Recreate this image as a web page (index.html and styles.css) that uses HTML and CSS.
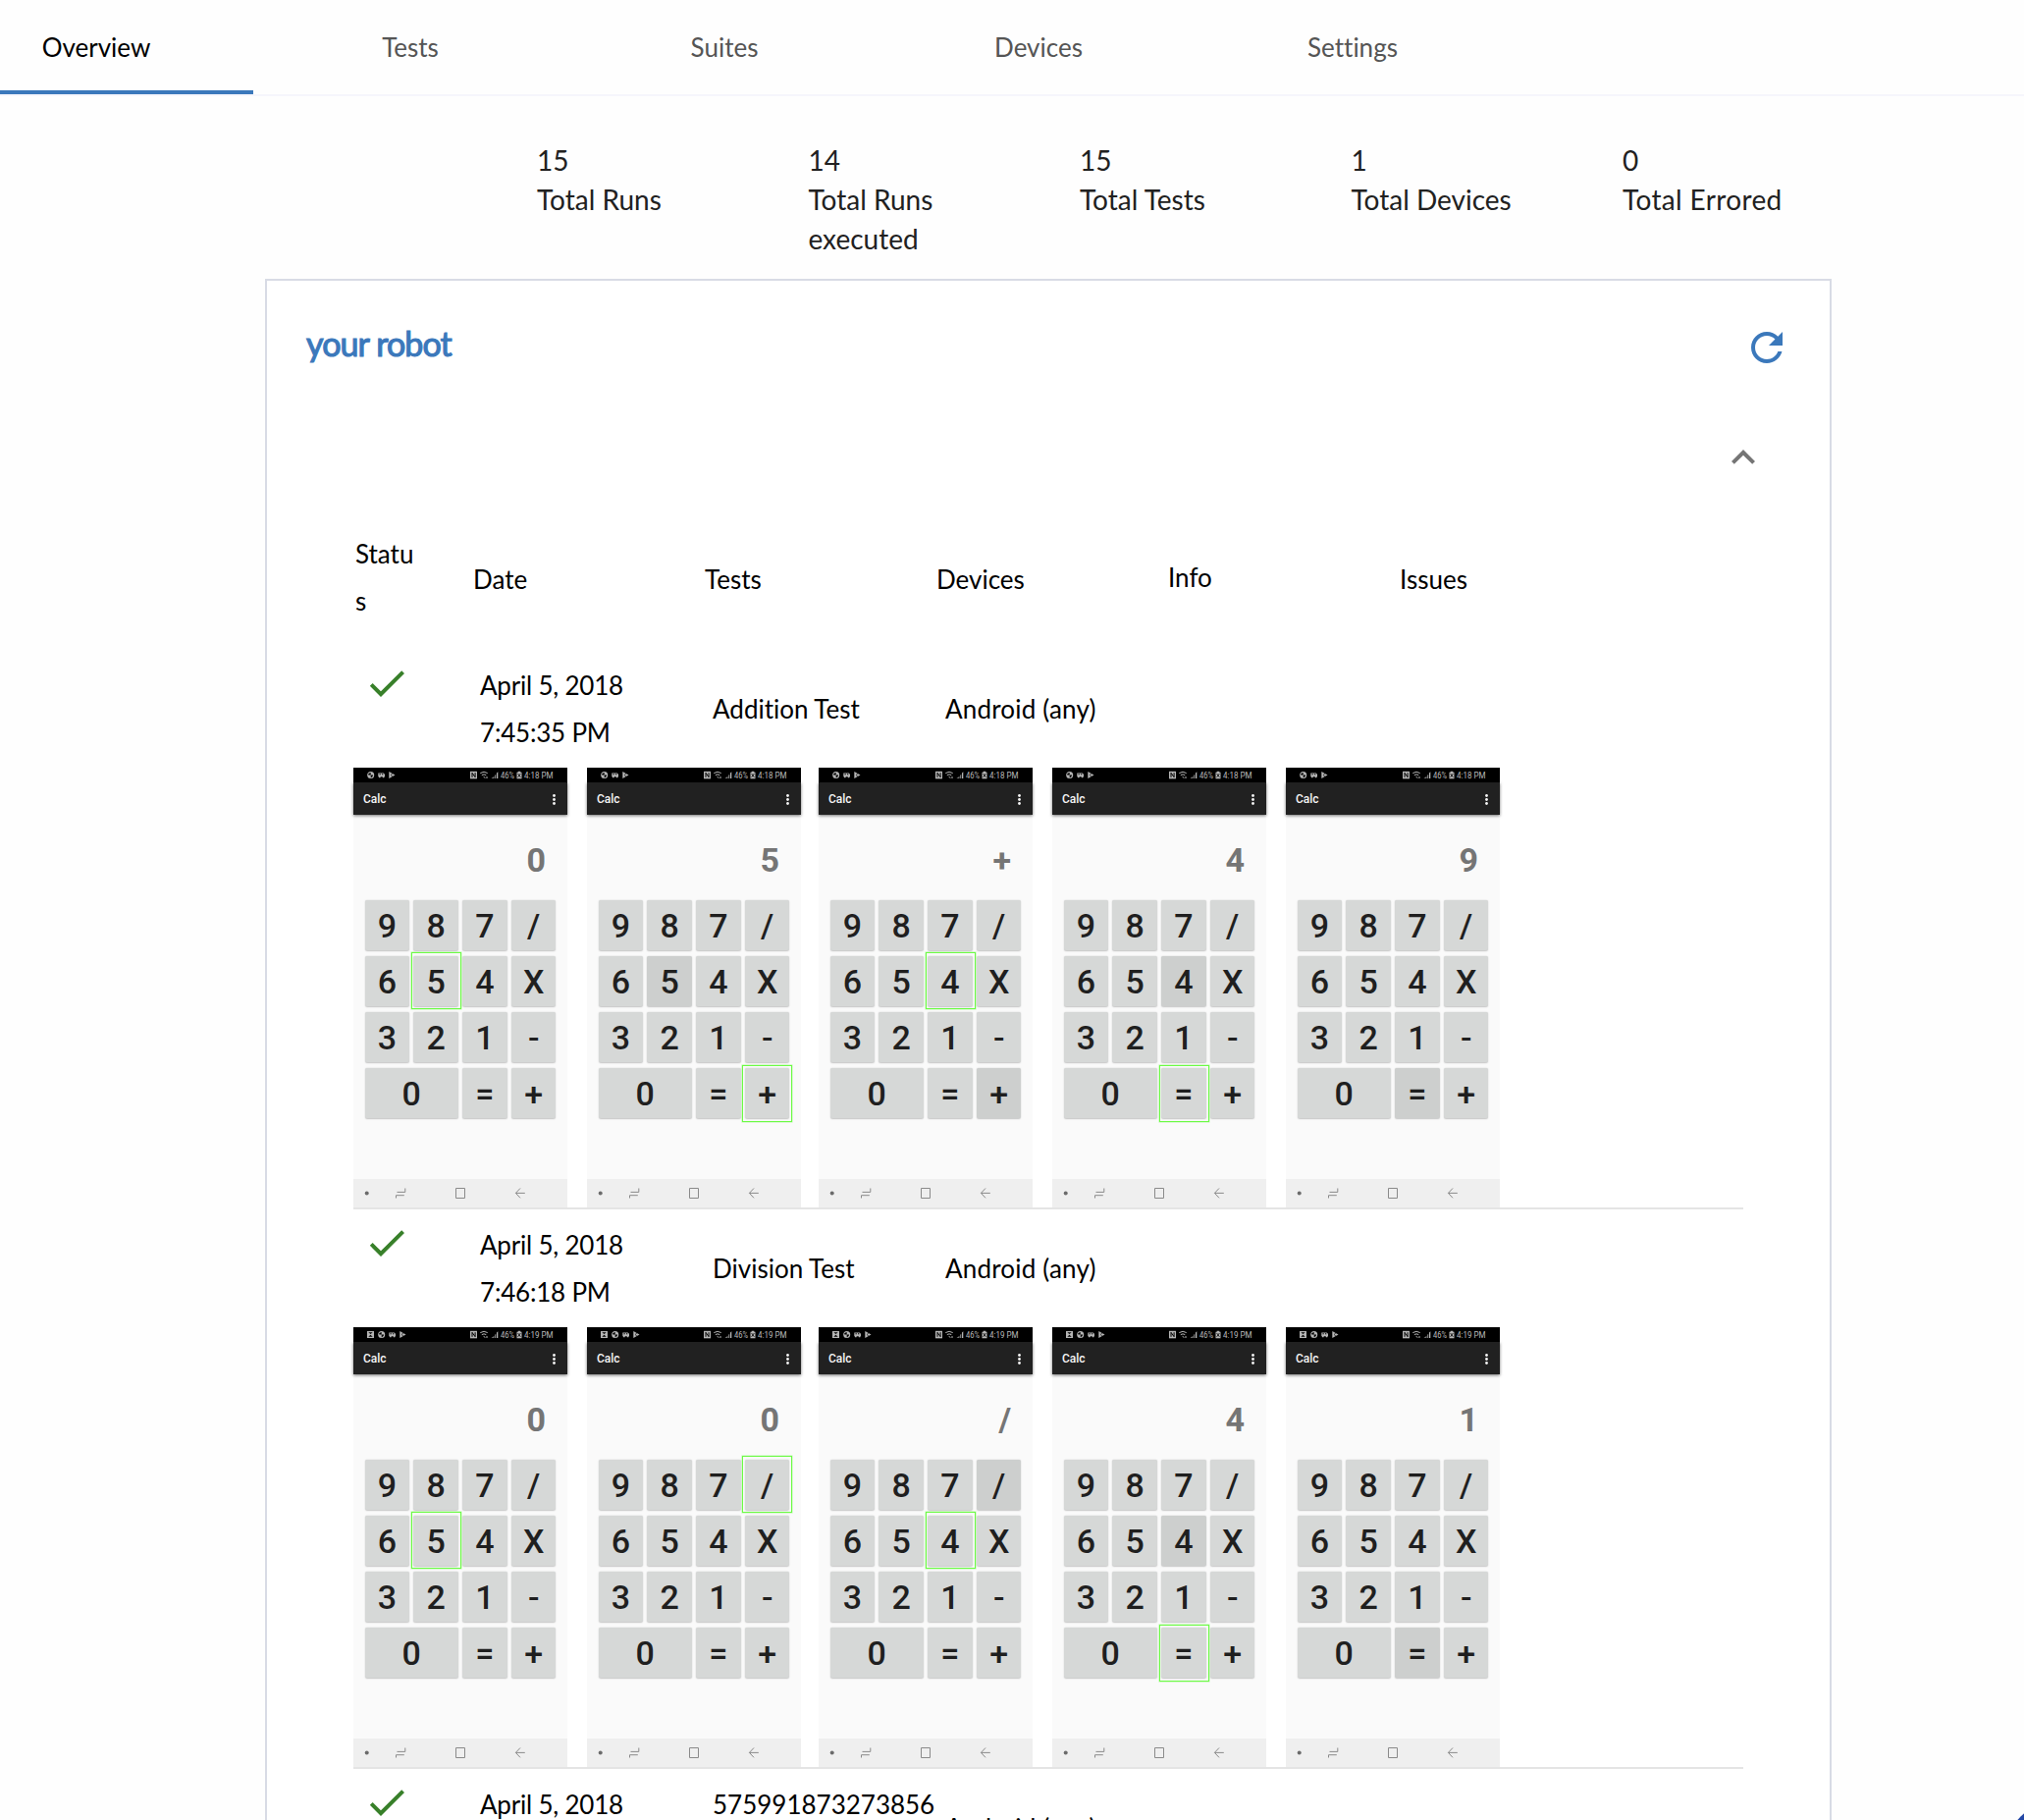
FILE: index.html
```html
<!DOCTYPE html>
<html lang="en">
<head>
<meta charset="utf-8">
<title>Overview</title>
<link rel="stylesheet" href="styles.css">
</head>
<body>
<nav class="tabs">
  <a class="tab tab-active">Overview</a>
  <a class="tab">Tests</a>
  <a class="tab">Suites</a>
  <a class="tab">Devices</a>
  <a class="tab">Settings</a>
</nav>
<section class="stats">
  <div class="stat"><div>15</div><div>Total Runs</div></div>
  <div class="stat"><div>14</div><div>Total Runs executed</div></div>
  <div class="stat"><div>15</div><div>Total Tests</div></div>
  <div class="stat"><div>1</div><div>Total Devices</div></div>
  <div class="stat stat-errored"><div>0</div><div>Total Errored</div></div>
</section>
<main class="panel">
  <header class="panel-head">
    <h1 class="panel-title">your robot</h1>
    <svg class="icon icon-refresh" viewBox="0 0 24 24"><path d="M17.65 6.35C16.2 4.9 14.21 4 12 4c-4.42 0-7.99 3.58-7.99 8s3.57 8 7.99 8c3.73 0 6.84-2.55 7.73-6h-2.08c-.82 2.33-3.04 4-5.65 4-3.31 0-6-2.69-6-6s2.69-6 6-6c1.66 0 3.14.69 4.22 1.78L13 11h7V4l-2.35 2.35z"/></svg>
  </header>
  <div class="collapse">
    <svg class="icon icon-collapse" viewBox="0 0 24 24"><path d="M12 8l-6 6 1.41 1.41L12 10.83l4.59 4.58L18 14z"/></svg>
  </div>
  <div class="table">
    <div class="head-row">
      <div class="head-status">Status</div>
      <div>Date</div>
      <div>Tests</div>
      <div>Devices</div>
      <div class="head-info">Info</div>
      <div>Issues</div>
    </div>
    <div class="run">
      <div class="run-row">
        <svg class="icon icon-check" viewBox="0 0 24 24"><path d="M9 16.17L4.83 12l-1.42 1.41L9 19 21 7l-1.41-1.41z"/></svg>
        <div class="run-date">April 5, 2018 7:45:35 PM</div>
        <div>Addition Test</div>
        <div class="run-device">Android (any)</div>
      </div>
      <div class="shots" data-time="4:18 PM" data-shots="0,5,; 5,+,5; +,4,+; 4,=,4; 9,,="></div>
    </div>
    <div class="run">
      <div class="run-row">
        <svg class="icon icon-check" viewBox="0 0 24 24"><path d="M9 16.17L4.83 12l-1.42 1.41L9 19 21 7l-1.41-1.41z"/></svg>
        <div class="run-date">April 5, 2018 7:46:18 PM</div>
        <div>Division Test</div>
        <div class="run-device">Android (any)</div>
      </div>
      <div class="shots" data-time="4:19 PM" data-picture="1" data-shots="0,5,; 0,/,; /,4,/; 4,=,4; 1,,="></div>
    </div>
    <div class="run">
      <div class="run-row">
        <svg class="icon icon-check" viewBox="0 0 24 24"><path d="M9 16.17L4.83 12l-1.42 1.41L9 19 21 7l-1.41-1.41z"/></svg>
        <div class="run-date">April 5, 2018</div>
        <div class="run-long">575991873273856</div>
        <div class="run-device">Android (any)</div>
      </div>
    </div>
  </div>
</main>
<div class="chat-button"></div>
<script src="script.js"></script>
</body>
</html>
```
FILE: styles.css
```css
* { box-sizing: border-box; }
body {
  margin: 0;
  height: 1854px;
  overflow: hidden;
  background: #fefefe;
  font: 26px/48px Lato, sans-serif;
  font-variant-ligatures: none;
  color: #000;
}
.tabs {
  display: flex;
  height: 98px;
  padding-left: 258px;
  margin-left: -320px;
  border-bottom: 2px solid #f6f6fc;
}
.tab {
  width: 320px;
  line-height: 97px;
  text-align: center;
  color: #555;
}
.tab-active {
  color: #000;
  border-bottom: 4px solid #3b78bb;
}
.stats {
  display: grid;
  grid-template-columns: repeat(5, 276.5px);
  padding: 45px 0 20px 547px;
  height: 186px;
  font-size: 28px;
  line-height: 40px;
  color: #212121;
}
.stat { padding-right: 96px; }
.stat:nth-child(n+3) { padding-right: 60px; }
.stat-errored { letter-spacing: .35px; }
.panel {
  width: 1596px;
  height: 1570px;
  margin-left: 270px;
  padding: 44px 47px 0 39px;
  border: 2px solid #d8dbe5;
  border-bottom: 0;
  background: #fff;
  overflow: hidden;
}
.panel-head {
  display: flex;
  justify-content: space-between;
  align-items: flex-start;
}
.panel-title {
  margin: 0;
  padding-left: 1px;
  font-size: 34px;
  line-height: 39px;
  font-weight: 400;
  letter-spacing: -.9px;
  -webkit-text-stroke: 1.1px #3b78bb;
  color: #3b78bb;
}
.icon { display: block; width: 48px; height: 48px; flex: none; }
.icon-refresh { fill: #3b78bb; margin-right: -7px; }
.collapse {
  display: flex;
  justify-content: flex-end;
  padding: 64px 17px 0 0;
}
.icon-collapse { fill: #757575; }
.table { width: 1416px; margin-left: 49px; }
.head-row {
  display: grid;
  grid-template-columns: 120px repeat(5, 236px);
  align-items: center;
  height: 172px;
  padding: 28px 0 0 2px;
}
.head-status {
  width: 68px;
  word-break: break-all;
  padding-bottom: 5px;
}
.head-info { padding-bottom: 4px; }
.run { border-bottom: 2px solid #e4e4e4; }
.run-row {
  display: grid;
  grid-template-columns: 119px 237px 237px 236px;
  align-items: center;
  height: 120px;
  padding-left: 10px;
}
.icon-check { align-self: start; margin-top: 10px; fill: #38802a; }
.run-date { width: 160px; height: 96px; letter-spacing: -.2px; }
.run-long { height: 96px; }
.run-device { letter-spacing: .2px; }
.shots { display: flex; gap: 20px; }
.phone {
  display: flex;
  flex-direction: column;
  width: 218px;
  height: 448px;
  background: #fafafa;
  font-family: Roboto, sans-serif;
  color: #1f1f1f;
}
.phone:nth-child(3) { margin-left: -2px; }
.phone-status { display: block; width: 218px; height: 15px; background: #000; }
.phone-status text { font: 9.6px Roboto, sans-serif; fill: #bbb; }
.phone-bar {
  display: flex;
  justify-content: space-between;
  align-items: center;
  height: 33px;
  padding: 1px 12px 0 10px;
  background: #212121;
  box-shadow: 0 1px 3px rgba(0, 0, 0, .55);
  font-size: 12px;
  line-height: 16px;
  font-weight: 500;
  color: #f5f5f5;
}
.dots { width: 3px; height: 11px; fill: #f5f5f5; }
.display {
  height: 86px;
  padding-right: 22px;
  text-align: right;
  font-size: 34px;
  line-height: 92px;
  font-weight: 700;
  color: #757575;
}
.keys {
  display: grid;
  grid-template-columns: repeat(4, 45.3px);
  grid-auto-rows: 51px;
  gap: 6.25px 4.5px;
  padding: .5px 0 0 11.7px;
  height: 285px;
}
.key {
  position: relative;
  border-radius: 2px;
  background: #d6d8d7;
  box-shadow: 0 .5px 1.5px rgba(0, 0, 0, .22);
  font-size: 34px;
  line-height: 53px;
  font-weight: 500;
  text-align: center;
}
.key-wide { grid-column: span 2; }
.key-pressed { background: #cdcfce; }
.key-target::after {
  content: "";
  position: absolute;
  inset: -3.3px -3px -3.3px -2.7px;
  border: 1px solid #6cfa45;
  box-shadow: 0 0 0 .5px rgba(124, 250, 92, .5);
}
.phone-nav { display: block; width: 218px; height: 29px; background: #efefef; }
.chat-button {
  position: fixed;
  left: 2041px;
  top: 1833px;
  width: 120px;
  height: 120px;
  border-radius: 50%;
  background: #2347a5;
}
```
FILE: script.js
```js
const KEYS = ['9', '8', '7', '/', '6', '5', '4', 'X', '3', '2', '1', '-', '0', '=', '+'];

function statusBar(time, picture) {
  const shift = picture ? 11 : 0;
  const image = picture
    ? '<path fill="#b5b5b5" d="M14 4h7v7h-7z"/><path fill="#000" d="M15.3 5.2h4.4L17.5 7zM15.3 9.8l2.2-2 2.2 2z"/>'
    : '';
  return `<svg class="phone-status" viewBox="0 0 218 15">
    ${image}
    <g transform="translate(${shift} 0)" fill="#b5b5b5">
      <circle cx="17.7" cy="7.5" r="3.5"/>
      <path fill="#000" d="M17.7 5v2.6h2.4c-.2 1.5-1.1 2.2-2.4 2.8V7.6h-2.4V6z"/>
      <path d="M25.3 5.5h5.4l1.3 1.2v2.5h-6.7z"/>
      <path fill="#000" d="M26.5 6.3h1.3v.9h-1.3zM29 6.3h1.3v.9H29z"/>
      <circle cx="26.8" cy="9.4" r=".9"/><circle cx="30.6" cy="9.4" r=".9"/>
      <path d="M36.3 4l6.2 3.4-6.2 3.6z"/>
      <path stroke="#000" stroke-width=".6" d="M38 7.5l3-2.5M38 7.5l3 2.4"/>
    </g>
    <path fill="#b5b5b5" d="M119 3.8h7v7.5h-7z"/>
    <path fill="none" stroke="#000" d="M121 9.8V5.3l3.1 4.4V5.2"/>
    <g fill="none" stroke="#b5b5b5">
      <path d="M129.3 5.6q3.8-2.7 7.4 0M130.8 7.6q2.2-1.5 4.5 0"/>
      <path d="M132.6 9.4l1.8 1M136 9v2"/>
    </g>
    <path fill="#777" d="M140.5 11h3V8.8zM144 11h1.3V6.8L144 7.7z"/>
    <path fill="#b5b5b5" d="M146 11h1.3V4.3L146 5.6z"/>
    <text x="150" y="10.8" textLength="14" lengthAdjust="spacingAndGlyphs">46%</text>
    <path fill="#b5b5b5" d="M167.7 3.7h2.6v1h1.2v6.5h-5V4.7h1.2z"/>
    <path fill="none" stroke="#000" stroke-width=".8" d="M167.6 6l2.8 3.8M170.4 6l-2.8 3.8"/>
    <text x="174" y="10.8" textLength="29.5" lengthAdjust="spacingAndGlyphs">${time}</text>
  </svg>`;
}

const NAV = `<svg class="phone-nav" viewBox="0 0 218 29">
  <circle cx="13.7" cy="14.4" r="2" fill="#6b6b6b"/>
  <g fill="none" stroke="#8a8a8a">
    <path d="M43.5 19.5v-2.8h8.3M44.5 13.4h8.3V9.5"/>
    <path d="M104.5 9.5h9v10h-9z"/>
    <path d="M170 9.5l-4.6 4.9 4.6 4.9M165.5 14.4h9.3"/>
  </g>
</svg>`;

function phone(time, picture, [value, target, pressed]) {
  const keys = KEYS.map(k => {
    const cls = ['key'];
    if (k === '0') cls.push('key-wide');
    if (k === target) cls.push('key-target');
    if (k === pressed) cls.push('key-pressed');
    return `<div class="${cls.join(' ')}">${k}</div>`;
  }).join('');
  return `<div class="phone">${statusBar(time, picture)}
    <div class="phone-bar"><span>Calc</span>
      <svg class="dots" viewBox="0 0 3 11"><circle cx="1.5" cy="1.5" r="1.4"/><circle cx="1.5" cy="5.5" r="1.4"/><circle cx="1.5" cy="9.5" r="1.4"/></svg>
    </div>
    <div class="display">${value}</div>
    <div class="keys">${keys}</div>
    ${NAV}</div>`;
}

document.querySelectorAll('.shots').forEach(row => {
  row.innerHTML = row.dataset.shots.split(';')
    .map(s => phone(row.dataset.time, row.dataset.picture, s.trim().split(',')))
    .join('');
});
```
